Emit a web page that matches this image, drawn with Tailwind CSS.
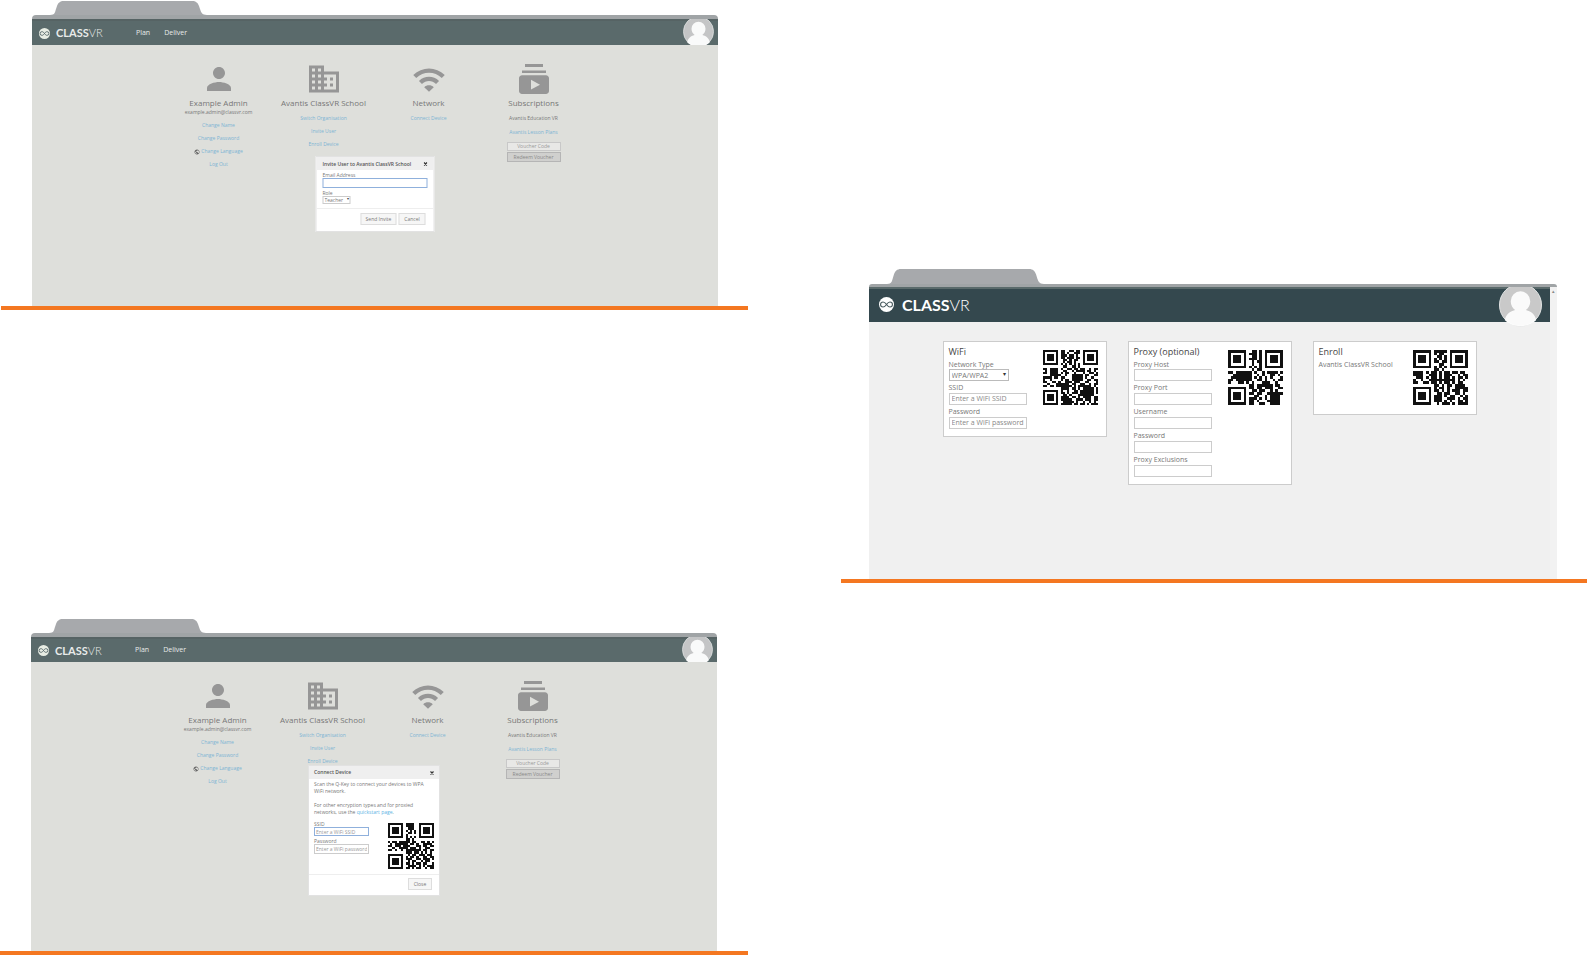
<!DOCTYPE html>
<html lang="en">
<head>
    <meta charset="UTF-8">
    <meta name="viewport" content="width=device-width, initial-scale=1.0">
    <title>ClassVR Portal</title>
    <script src="https://cdn.jsdelivr.net/npm/@tailwindcss/browser@4"></script>
</head>
<body class="bg-white font-['Open_Sans',sans-serif] text-[#777]">

    <!-- Shared icons -->
    <svg class="hidden" xmlns="http://www.w3.org/2000/svg">
        <symbol id="tab" viewBox="0 0 157 14" preserveAspectRatio="none">
            <path d="M0 14c5 0 5-3 6-6l1-3C8 2 10 0 14 0h128c4 0 6 2 7 5l1 3c1 3 2 6 7 6z" />
        </symbol>
        <symbol id="logo" viewBox="0 0 24 24">
            <circle cx="12" cy="12" r="12" fill="currentColor" />
            <path d="M12 12C9.500 8.500 8 8 6.500 8a4 4 0 0 0 0 8C8 16 9.500 15.500 12 12s4-4 5.500-4a4 4 0 0 1 0 8C16 16 14.500 15.500 12 12z" fill="none" stroke="#4a5c60" stroke-width="1.800" />
        </symbol>
        <symbol id="avatar" viewBox="0 4 44 40">
            <circle cx="22" cy="22" r="21.500" fill="currentColor" stroke="#e4e6e6" />
            <path d="M22 8a10 10 0 0 1 10 10c0 4-2 7-4.500 9 6 1.500 10 5.500 10.500 10.500C34 41.500 28 43.500 22 43.500S10 41.500 6 37.500C6.500 32.500 10.500 28.500 16.500 27 14 25 12 22 12 18A10 10 0 0 1 22 8z" fill="#fff" fill-opacity=".9" />
        </symbol>
        <symbol id="person" viewBox="0 0 24 24">
            <path d="M12 12c2.210 0 4-1.790 4-4s-1.790-4-4-4-4 1.790-4 4 1.790 4 4 4zm0 2c-2.670 0-8 1.340-8 4v2h16v-2c0-2.660-5.330-4-8-4z" />
        </symbol>
        <symbol id="building" viewBox="0 0 24 24">
            <path d="M12 7V3H2v18h20V7H12zM6 19H4v-2h2v2zm0-4H4v-2h2v2zm0-4H4V9h2v2zm0-4H4V5h2v2zm4 12H8v-2h2v2zm0-4H8v-2h2v2zm0-4H8V9h2v2zm0-4H8V5h2v2zm10 12h-8v-2h2v-2h-2v-2h2v-2h-2V9h8v10zm-2-8h-2v2h2v-2zm0 4h-2v2h2v-2z" />
        </symbol>
        <symbol id="wifi" viewBox="0 0 24 24">
            <path d="M1.500 9.300l2 2c4.700-4.700 12.300-4.700 17 0l2-2C16.700 3.500 7.300 3.500 1.500 9.300zm7.300 8.200L12 20.500l3.200-3c-1.750-1.750-4.650-1.750-6.400 0zM5.300 13.300l2 2c2.600-2.600 6.800-2.600 9.400 0l2-2c-3.700-3.700-9.700-3.700-13.400 0z" />
        </symbol>
        <symbol id="subs" viewBox="0 0 24 24">
            <path d="M20 8H4V6.400h16V8zm-2-6H6v2h12V2zm4 9.500V20c0 1.100-.9 2-2 2H4c-1.100 0-2-.9-2-2v-8.500c0-1.100.9-2 2-2h16c1.100 0 2 .9 2 2zm-6 4.300l-6-3.270v6.530L16 15.800z" />
        </symbol>
        <symbol id="globe" viewBox="0 0 24 24">
            <path d="M12 2C6.480 2 2 6.480 2 12s4.480 10 10 10 10-4.480 10-10S17.520 2 12 2zm-1 17.930c-3.950-.49-7-3.850-7-7.930 0-.62.08-1.210.21-1.790L9 15v1c0 1.100.9 2 2 2v1.930zm6.900-2.540c-.26-.81-1-1.390-1.900-1.390h-1v-3c0-.55-.45-1-1-1H8v-2h2c.55 0 1-.45 1-1V7h2c1.100 0 2-.9 2-2v-.41c2.930 1.190 5 4.060 5 7.410 0 2.080-.8 3.970-2.100 5.390z" />
        </symbol>
        <symbol id="cross" viewBox="0 0 4 4">
            <path d="M.5.5l3 3m0-3l-3 3" stroke="currentColor" stroke-width="1.200" />
        </symbol>
    </svg>

    <main class="grid min-h-screen grid-cols-[748fr_746fr] gap-x-[93px]">

        <div class="flex flex-col gap-[308px]">

            <!-- Invite user -->
            <section class="ml-px border-b-4 border-[#f47721] pt-px pr-[30px] pl-[31px]">
                <svg class="ml-[18px] block h-[14px] w-[157px] fill-[#a7a9ac]"><use href="#tab" /></svg>
                <div class="h-1 rounded-t-sm bg-[#a0a4a6]"></div>
                <header class="relative flex h-[26px] items-center border-t-2 border-[#566364] bg-[#5a6a6b] pl-[7px] text-[#e8ebea]">
                    <svg class="h-[11px] w-[11px] text-[#e8ede4]"><use href="#logo" /></svg>
                    <span class="ml-[6px] w-[80px] pb-px font-['Lato',sans-serif] text-[11px] leading-none font-bold">CLASS<span class="font-light">VR</span></span>
                    <nav class="flex gap-[14px] text-[7px]">
                        <a href="#">Plan</a>
                        <a href="#">Deliver</a>
                    </nav>
                    <svg class="absolute -top-[2px] right-1 h-[28px] w-[31px] text-[#c4c5c6]"><use href="#avatar" /></svg>
                </header>
                <div class="relative h-[261px] bg-[#dedfdb] pt-4 pl-[2px]">
                    <div class="mx-auto grid w-[420px] grid-cols-4 text-center text-[5px] leading-[13px]">
                        <div class="flex flex-col items-center text-[#7db4d4]">
                            <svg class="h-9 w-9 fill-[#969696]"><use href="#person" /></svg>
                            <h2 class="text-[8px] leading-3 text-[#777]">Example Admin</h2>
                            <p class="mb-1 leading-[6px] text-[#777]">example.admin@classvr.com</p>
                            <a href="#">Change Name</a>
                            <a href="#">Change Password</a>
                            <a href="#" class="flex items-center gap-px"><svg class="h-[6px] w-[6px] fill-[#666]"><use href="#globe" /></svg>Change Language</a>
                            <a href="#">Log Out</a>
                        </div>
                        <div class="flex flex-col items-center text-[#7db4d4]">
                            <svg class="h-9 w-9 fill-[#969696]"><use href="#building" /></svg>
                            <h2 class="mb-[3px] text-[8px] leading-3 whitespace-nowrap text-[#777]">Avantis ClassVR School</h2>
                            <a href="#">Switch Organisation</a>
                            <a href="#">Invite User</a>
                            <a href="#">Enroll Device</a>
                        </div>
                        <div class="flex flex-col items-center text-[#7db4d4]">
                            <svg class="h-9 w-9 fill-[#969696]"><use href="#wifi" /></svg>
                            <h2 class="mb-[3px] text-[8px] leading-3 text-[#777]">Network</h2>
                            <a href="#">Connect Device</a>
                        </div>
                        <div class="flex flex-col items-center text-[#7db4d4]">
                            <svg class="h-9 w-9 fill-[#969696]"><use href="#subs" /></svg>
                            <h2 class="mb-[3px] text-[8px] leading-3 text-[#777]">Subscriptions</h2>
                            <p class="text-[#777]">Avantis Education VR</p>
                            <a href="#" class="mt-px mb-[3px]">Avantis Lesson Plans</a>
                            <input type="text" aria-label="Voucher Code" placeholder="Voucher Code" class="h-[9px] w-[54px] border border-[#c8c8c8] bg-[#e8e8e6] text-center placeholder:text-[#999]">
                            <button class="mt-px h-[10px] w-[54px] border border-[#b5b5b5] bg-[#d0d0ce] leading-none text-[#888]">Redeem Voucher</button>
                        </div>
                    </div>

                    <form role="dialog" aria-label="Invite User" class="absolute top-[111px] left-1/2 flex w-[119px] -translate-x-1/2 flex-col border border-[#e2e2e2] bg-white text-[5px] leading-[6px]">
                        <div class="flex h-[13px] items-center justify-between bg-[#efefef] px-[6px] font-semibold text-[#555]">
                            <h3>Invite User to Avantis ClassVR School</h3>
                            <button type="button" aria-label="Close" class="text-[#333]"><svg class="h-1 w-1"><use href="#cross" /></svg></button>
                        </div>
                        <div class="flex flex-col items-start px-[6px] pt-[2px] pb-[4px]">
                            <label for="invite-email">Email Address</label>
                            <input id="invite-email" type="email" class="h-[10px] w-full border border-[#8fb0dc] bg-white px-px">
                            <label for="invite-role" class="mt-[2px]">Role</label>
                            <div class="relative">
                                <select id="invite-role" class="block h-[8px] w-[28px] appearance-none border border-[#ccc] bg-white pl-px leading-none"><option>Teacher</option></select>
                                <span class="pointer-events-none absolute top-0 right-[2px] text-[4px] text-[#444]">▾</span>
                            </div>
                        </div>
                        <div class="flex h-[23px] items-start justify-end gap-[2px] border-t border-[#eee] pt-1 pr-[8px]">
                            <button class="h-3 w-[36px] border border-[#ddd] bg-[#f6f6f6]">Send Invite</button>
                            <button type="button" class="h-3 w-[27px] border border-[#ddd] bg-[#f6f6f6]">Cancel</button>
                        </div>
                    </form>
                </div>
            </section>

            <!-- Connect device -->
            <section class="flex flex-1 flex-col border-b-4 border-[#f47721] pt-px pr-[31px] pl-[31px]">
                <svg class="ml-[18px] block h-[14px] w-[157px] fill-[#a7a9ac]"><use href="#tab" /></svg>
                <div class="h-1 rounded-t-sm bg-[#a0a4a6]"></div>
                <header class="relative flex h-[25px] items-center border-t-2 border-[#566364] bg-[#5a6a6b] pl-[7px] text-[#e8ebea]">
                    <svg class="h-[11px] w-[11px] text-[#e8ede4]"><use href="#logo" /></svg>
                    <span class="ml-[6px] w-[80px] pb-px font-['Lato',sans-serif] text-[11px] leading-none font-bold">CLASS<span class="font-light">VR</span></span>
                    <nav class="flex gap-[14px] text-[7px]">
                        <a href="#">Plan</a>
                        <a href="#">Deliver</a>
                    </nav>
                    <svg class="absolute -top-[2px] right-1 h-[28px] w-[31px] text-[#c4c5c6]"><use href="#avatar" /></svg>
                </header>
                <div class="relative flex-1 bg-[#dedfdb] pt-4 pl-[2px]">
                    <div class="mx-auto grid w-[420px] grid-cols-4 text-center text-[5px] leading-[13px]">
                        <div class="flex flex-col items-center text-[#7db4d4]">
                            <svg class="h-9 w-9 fill-[#969696]"><use href="#person" /></svg>
                            <h2 class="text-[8px] leading-3 text-[#777]">Example Admin</h2>
                            <p class="mb-1 leading-[6px] text-[#777]">example.admin@classvr.com</p>
                            <a href="#">Change Name</a>
                            <a href="#">Change Password</a>
                            <a href="#" class="flex items-center gap-px"><svg class="h-[6px] w-[6px] fill-[#666]"><use href="#globe" /></svg>Change Language</a>
                            <a href="#">Log Out</a>
                        </div>
                        <div class="flex flex-col items-center text-[#7db4d4]">
                            <svg class="h-9 w-9 fill-[#969696]"><use href="#building" /></svg>
                            <h2 class="mb-[3px] text-[8px] leading-3 whitespace-nowrap text-[#777]">Avantis ClassVR School</h2>
                            <a href="#">Switch Organisation</a>
                            <a href="#">Invite User</a>
                            <a href="#">Enroll Device</a>
                        </div>
                        <div class="flex flex-col items-center text-[#7db4d4]">
                            <svg class="h-9 w-9 fill-[#969696]"><use href="#wifi" /></svg>
                            <h2 class="mb-[3px] text-[8px] leading-3 text-[#777]">Network</h2>
                            <a href="#">Connect Device</a>
                        </div>
                        <div class="flex flex-col items-center text-[#7db4d4]">
                            <svg class="h-9 w-9 fill-[#969696]"><use href="#subs" /></svg>
                            <h2 class="mb-[3px] text-[8px] leading-3 text-[#777]">Subscriptions</h2>
                            <p class="text-[#777]">Avantis Education VR</p>
                            <a href="#" class="mt-px mb-[3px]">Avantis Lesson Plans</a>
                            <input type="text" aria-label="Voucher Code" placeholder="Voucher Code" class="h-[9px] w-[54px] border border-[#c8c8c8] bg-[#e8e8e6] text-center placeholder:text-[#999]">
                            <button class="mt-px h-[10px] w-[54px] border border-[#b5b5b5] bg-[#d0d0ce] leading-none text-[#888]">Redeem Voucher</button>
                        </div>
                    </div>

                    <form role="dialog" aria-label="Connect Device" class="absolute top-[103px] left-1/2 flex w-[132px] -translate-x-1/2 flex-col border border-[#e2e2e2] bg-white text-[5px] leading-[7px]">
                        <div class="flex h-[13px] items-center justify-between bg-[#efefef] px-[5px] font-semibold text-[#555]">
                            <h3>Connect Device</h3>
                            <button type="button" aria-label="Close dialog" class="text-[#333]"><svg class="h-1 w-1"><use href="#cross" /></svg></button>
                        </div>
                        <div class="px-[5px] pt-[2px] pb-[5px]">
                            <p>Scan the Q-Key to connect your devices to WPA<br>WiFi network.</p>
                            <p class="mt-[7px]">For other encryption types and for proxied<br>networks, use the <a href="#" class="text-[#5cb3e4]">quickstart page</a>.</p>
                            <div class="mt-[5px] flex justify-between leading-[6px]">
                                <div class="flex flex-col">
                                    <label for="dlg-ssid">SSID</label>
                                    <input id="dlg-ssid" type="text" placeholder="Enter a WiFi SSID" class="h-[9px] w-[55px] border border-[#8fb0dc] px-px placeholder:text-[#999]">
                                    <label for="dlg-pass" class="mt-[2px]">Password</label>
                                    <input id="dlg-pass" type="text" placeholder="Enter a WiFi password" class="h-[10px] w-[55px] border border-[#ccc] px-px placeholder:text-[#999]">
                                </div>
                                <svg data-qr="connect" class="mt-[2px] h-[46px] w-[46px]" role="img" aria-label="WiFi QR code"></svg>
                            </div>
                        </div>
                        <div class="flex h-[21px] items-start justify-end border-t border-[#eee] pt-[3px] pr-[7px]">
                            <button type="button" class="h-3 w-6 border border-[#ddd] bg-[#f6f6f6]">Close</button>
                        </div>
                    </form>
                </div>
            </section>
        </div>

        <!-- Quickstart page -->
        <section class="mt-[269px] self-start border-b-4 border-[#f47721] pr-[30px] pl-[28px]">
            <svg class="ml-[18px] block h-[15px] w-[157px] fill-[#a7a9ac]"><use href="#tab" /></svg>
            <div class="h-[3px] rounded-t-sm bg-[#a0a4a6]"></div>
            <div class="flex">
                <div class="flex-1 bg-[#f0f0f0]">
                    <header class="relative flex h-[35px] items-center border-t-2 border-[#5a6a6b] bg-[#34484e] pb-[2px] pl-[10px] text-white">
                        <svg class="h-[15px] w-[15px]"><use href="#logo" /></svg>
                        <span class="ml-2 font-['Lato',sans-serif] text-[16px] leading-none font-bold">CLASS<span class="font-light">VR</span></span>
                        <svg class="absolute -top-[2px] right-2 h-[40px] w-[43px] text-[#c9c9c9]"><use href="#avatar" /></svg>
                    </header>
                    <div class="flex h-[257px] items-start justify-center gap-[21px] pt-[19px] text-[7px] leading-3">
                        <div class="flex w-[164px] justify-between border border-[#ccc] bg-white pt-1 pr-2 pb-[7px] pl-[5px]">
                            <div class="flex flex-col">
                                <h2 class="mb-[2px] text-[9px] leading-[11px] text-[#444]">WiFi</h2>
                                <label for="net-type" class="h-[10px] pt-px leading-[10px]">Network Type</label>
                                <div class="relative w-[60px]">
                                    <select id="net-type" class="block h-3 w-full appearance-none border border-[#bbb] bg-white pl-[2px] leading-none"><option>WPA/WPA2</option></select>
                                    <span class="pointer-events-none absolute top-0 right-[3px] text-[6px] leading-[11px] text-[#333]">▾</span>
                                </div>
                                <label for="ssid" class="h-3 pt-px">SSID</label>
                                <input id="ssid" type="text" placeholder="Enter a WiFi SSID" class="h-3 w-[78px] border border-[#ccc] px-[2px] placeholder:text-[#888]">
                                <label for="pass" class="h-3 pt-px">Password</label>
                                <input id="pass" type="text" placeholder="Enter a WiFi password" class="h-3 w-[78px] border border-[#ccc] px-[2px] placeholder:text-[#888]">
                            </div>
                            <svg data-qr="wifi" class="mt-1 h-[55px] w-[55px]" role="img" aria-label="WiFi QR code"></svg>
                        </div>
                        <div class="flex w-[164px] justify-between border border-[#ccc] bg-white pt-1 pr-2 pb-[7px] pl-[5px]">
                            <div class="flex flex-col">
                                <h2 class="mb-[2px] text-[9px] leading-[11px] text-[#444]">Proxy (optional)</h2>
                                <label for="proxy-host" class="h-[10px] pt-px leading-[10px]">Proxy Host</label>
                                <input id="proxy-host" type="text" class="h-3 w-[78px] border border-[#ccc]">
                                <label for="proxy-port" class="h-3 pt-px">Proxy Port</label>
                                <input id="proxy-port" type="text" class="h-3 w-[78px] border border-[#ccc]">
                                <label for="proxy-user" class="h-3 pt-px">Username</label>
                                <input id="proxy-user" type="text" class="h-3 w-[78px] border border-[#ccc]">
                                <label for="proxy-pass" class="h-3 pt-px">Password</label>
                                <input id="proxy-pass" type="text" class="h-3 w-[78px] border border-[#ccc]">
                                <label for="proxy-excl" class="h-3 pt-px">Proxy Exclusions</label>
                                <input id="proxy-excl" type="text" class="h-3 w-[78px] border border-[#ccc]">
                            </div>
                            <svg data-qr="proxy" class="mt-1 h-[55px] w-[55px]" role="img" aria-label="Proxy QR code"></svg>
                        </div>
                        <div class="flex w-[164px] justify-between border border-[#ccc] bg-white pt-1 pr-2 pb-[9px] pl-[5px]">
                            <div>
                                <h2 class="mb-[2px] text-[9px] leading-[11px] text-[#444]">Enroll</h2>
                                <p class="pt-px leading-[10px]">Avantis ClassVR School</p>
                            </div>
                            <svg data-qr="enroll" class="mt-1 h-[55px] w-[55px]" role="img" aria-label="Enroll QR code"></svg>
                        </div>
                    </div>
                </div>
                <div class="w-[7px] bg-[#f2f2f2] text-center text-[5px] leading-[8px] text-[#888]">▴</div>
            </div>
        </section>
    </main>

    <script>
        // Module rows for each code, # is a dark module
        const CODES = {
            wifi: [
                '#######.##..##.##.#######', '#.....#.##.#..###.#.....#', '#.###.#.###.##.#..#.###.#',
                '#.###.#.##.###.##.#.###.#', '#.###.#..##.#.##..#.###.#', '#.....#..#.##.#...#.....#',
                '#######.#.#.#.#.#.#######', '.........##..##.#........', '##.####.#..##.##.##..#.##',
                '.#.####..##..#.####.##.#.', '##.####.#.##..#...#..##.#', '...#####..#..#####.##..##',
                '####.##.##...#####.#..#..', '#..#....#.##.#####..##.##', '##..##.#..###.###..##...#',
                '..#...######.##..##..#.##', '##.##.#######.#.######.#.', '........####.##.#.#####.#',
                '#######.#..#..##.######.#', '#.....#.##.#.###.######.#', '#.###.#..##.#...#######..',
                '#.###.#.####.##.#.####.##', '#.###.#.#####..###.###.##', '#.....#..#####.#..#..#.#.',
                '#######.#####.##.##.#.###'
            ],
            proxy: [
                '#######..##.#.#######', '#.....#.###.#.#.....#', '#.###.#..##.#.#.###.#',
                '#.###.#.###.#.#.###.#', '#.###.#..#.##.#.###.#', '#.....#..#..#.#.....#',
                '#######.#.#.#.#######', '.........#.##........', '##.######.#..#.####.#',
                '..#######..#.#..##.#.', '.########.#.#.#.#...#', '##.######..##.#..#.##',
                '#...##.#.#...###..#..', '........##.######.##.', '#######.##.##.###..##',
                '#.....#..##.##..#.#..', '#.###.#.##.##..######', '#.###.#...##..#.####.',
                '#.###.#.###.#.#.####.', '#.....#.##.#...#####.', '#######.##..##..####.'
            ],
            enroll: [
                '#######.#####.#######', '#.....#.#.##..#.....#', '#.###.#..##.#.#.###.#',
                '#.###.#.#.#.#.#.###.#', '#.###.#.##.##.#.###.#', '#.....#...##..#.....#',
                '#######.#.#.#.#######', '........##.#.........', '####.#.##.#.##.##.##.',
                '####..###.#.###..#.##', '.###.#.##.#.##.#.##.#', '#..#..##########.#.#.',
                '##..##.##.#.##.#.##..', '........##.#.##.####.', '#######.#.##.#..#####',
                '#.....#.##.#.#.###.##', '#.###.#..##.##..##.#.', '#.###.#.###.#.##..#.#',
                '#.###.#.###..###.#.##', '#.....#.###.#.#..##.#', '#######..#.###.#.####'
            ],
            connect: [
                '#######.####..#######', '#.....#.####..#.....#', '#.###.#..###..#.###.#',
                '#.###.#.#.#.#.#.###.#', '#.###.#..##.#.#.###.#', '#.....#.#.....#.....#',
                '#######.#.#.#.#######', '........##.#.........', '#.##.#####.##..##.#.#',
                '.#.######.##.#..####.', '##.###.###...##.##.##', '..#..####.###.#..##..',
                '##.#..#.#######.##.##', '........###.##.#.#.#.', '#######..#.##.###.##.',
                '#.....#.#.##.#..##.##', '#.###.#.###..##.###.#', '#.###.#..#.##..#.##..',
                '#.###.#.##.#.##.##..#', '#.....#..####.#.#.###', '#######.##.#.##..#.##'
            ]
        };

        document.querySelectorAll('[data-qr]').forEach((svg) => {
            const rows = CODES[svg.dataset.qr];
            let d = '';
            rows.forEach((row, y) => {
                [...row].forEach((cell, x) => {
                    if (cell === '#') d += `M${x} ${y}h1v1h-1z`;
                });
            });
            svg.setAttribute('viewBox', `0 0 ${rows.length} ${rows.length}`);
            svg.setAttribute('shape-rendering', 'crispEdges');
            svg.innerHTML = `<path d="${d}" fill="#111"/>`;
        });
    </script>

</body>
</html>
